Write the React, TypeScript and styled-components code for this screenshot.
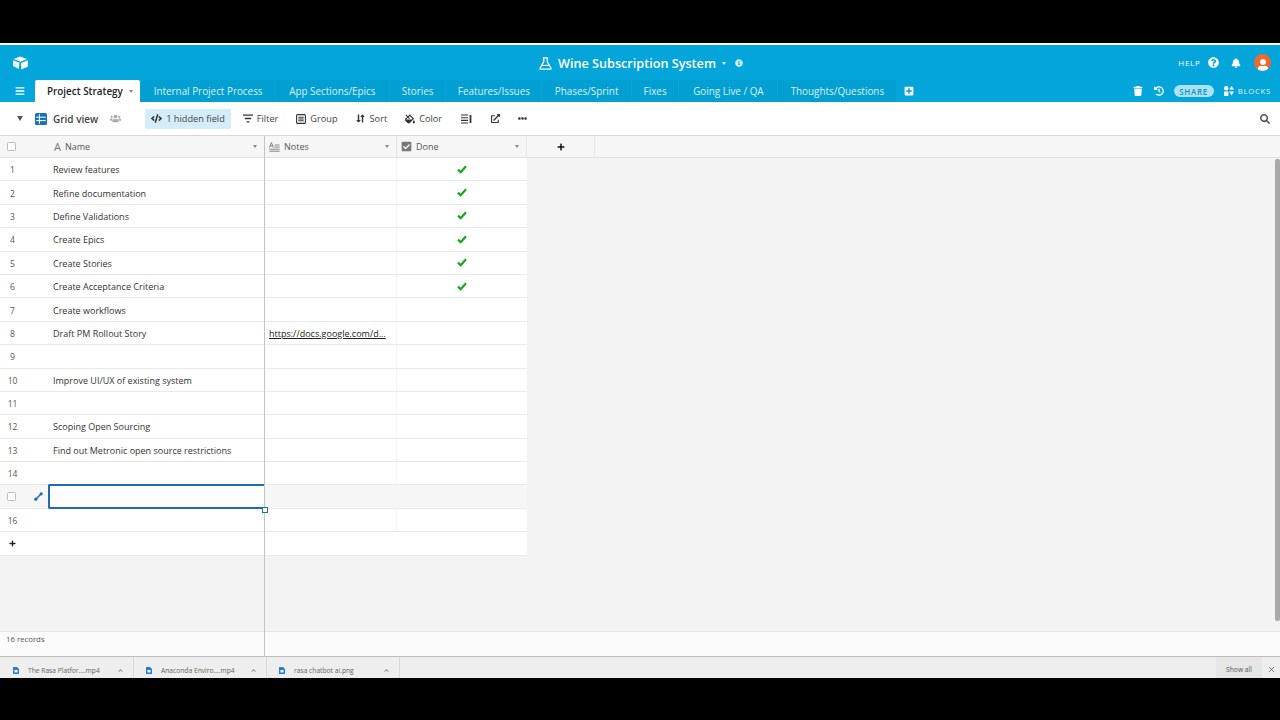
import React from "react";
import styled, { createGlobalStyle } from "styled-components";
import {
  FaBars,
  FaBell,
  FaCheckSquare,
  FaChevronUp,
  FaCode,
  FaEllipsisH,
  FaExternalLinkAlt,
  FaFillDrip,
  FaHistory,
  FaInfoCircle,
  FaLongArrowAltDown,
  FaLongArrowAltUp,
  FaPlus,
  FaPlusSquare,
  FaQuestionCircle,
  FaSearch,
  FaTrash,
  FaUser,
  FaUsers,
} from "react-icons/fa";
import { X } from "lucide-react";

const Global = createGlobalStyle`
  html, body { margin: 0; padding: 0; background: #000; overflow: hidden; }
  body { font-family: "Open Sans", "Noto Sans", sans-serif; color: #333; }
`;

const Screen = styled.div`
  width: 1280px;
  height: 720px;
  display: flex;
  flex-direction: column;
  background: #000;
  position: relative;
  overflow: hidden;
`;

const BlackBar = styled.div<{ h: number }>`
  height: ${({ h }) => h}px;
  flex: none;
  background: #000;
`;

const WhiteLine = styled.div`
  height: 2px;
  flex: none;
  background: #fff;
`;

const Header = styled.header`
  height: 57px;
  flex: none;
  background: #03a5da;
  color: #fff;
  display: flex;
  flex-direction: column;
  position: relative;
`;

const TopRow = styled.div`
  height: 35px;
  display: flex;
  align-items: center;
  justify-content: space-between;
  padding: 0 9px 0 12px;
`;

const Title = styled.div`
  display: flex;
  align-items: center;
  font-size: 12.65px;
  font-weight: 600;
  gap: 6px;
  position: absolute;
  left: 539px;
  top: 9px;
  height: 18px;
`;

const Caret = styled.span<{ dark?: boolean }>`
  display: inline-block;
  width: 0;
  height: 0;
  border-left: 2.5px solid transparent;
  border-right: 2.5px solid transparent;
  border-top: 3px solid ${({ dark }) => (dark ? "#888" : "rgba(255,255,255,.85)")};
`;

const ViewCaret = styled(Caret)`
  border-left-width: 3.5px;
  border-right-width: 3.5px;
  border-top-width: 5px;
  border-top-color: #555;
`;

const InfoWrap = styled.span`
  display: flex;
  margin-left: 3px;
  color: rgba(255, 255, 255, 0.8);
`;

const RightTools = styled.div`
  display: flex;
  align-items: center;
  gap: 7px;
`;

const HelpText = styled.span`
  font-size: 8px;
  letter-spacing: 0.7px;
  font-weight: 500;
`;

const BellWrap = styled.span`
  display: flex;
  margin-left: 5.5px;
`;

const Avatar = styled.div`
  width: 17px;
  height: 17px;
  border-radius: 50%;
  background: #ee6a2b;
  display: flex;
  align-items: flex-end;
  justify-content: center;
  overflow: hidden;
  margin-left: 6px;
`;

const TabRow = styled.div`
  height: 22px;
  display: flex;
  align-items: stretch;
  position: relative;
`;

const MenuBtn = styled.div`
  width: 35px;
  flex: none;
  display: flex;
  align-items: center;
  justify-content: center;
  padding-left: 4px;
  box-sizing: border-box;
`;

const ActiveTab = styled.div`
  display: flex;
  align-items: center;
  padding: 0 7px 0 12px;
  gap: 6.5px;
  font-size: 9.9px;
  font-weight: 600;
  color: #222;
  background: #fff;
  white-space: nowrap;
  border-radius: 2px 2px 0 0;
  margin-right: 1px;
`;

const Tab = styled.div<{ w: number }>`
  width: ${({ w }) => w}px;
  flex: none;
  display: flex;
  align-items: center;
  justify-content: center;
  box-sizing: border-box;
  font-size: 9.9px;
  white-space: nowrap;
  background: rgba(0, 0, 40, 0.035);
  border-right: 1px solid #03a5da;
  color: rgba(255, 255, 255, 0.86);
`;

const AddTab = styled.div`
  display: flex;
  align-items: center;
  margin-left: 7px;
`;

const BaseTools = styled.div`
  margin-left: auto;
  display: flex;
  align-items: center;
  gap: 11px;
  padding-right: 9px;
`;

const ShareBtn = styled.div`
  background: rgba(255, 255, 255, 0.68);
  color: #0b93c4;
  font-size: 8px;
  font-weight: 600;
  letter-spacing: 0.7px;
  height: 12px;
  width: 40px;
  margin-left: -1px;
  border-radius: 6px;
  display: flex;
  align-items: center;
  justify-content: center;
`;

const BlocksBtn = styled.div`
  display: flex;
  align-items: center;
  gap: 4px;
  font-size: 7.8px;
  letter-spacing: 0.7px;
  font-weight: 500;
  margin-left: -1px;
  color: rgba(255, 255, 255, 0.92);
`;

const Toolbar = styled.div`
  height: 33px;
  flex: none;
  background: #fff;
  display: flex;
  align-items: center;
  padding: 0 10px 0 17px;
  color: #444;
  font-size: 9.2px;
`;

const ViewName = styled.div`
  display: flex;
  align-items: center;
  gap: 6px;
  margin-left: 12px;
  font-weight: 600;
  font-size: 10px;
  color: #444;
`;

const UsersWrap = styled.span`
  display: flex;
  margin-left: 6px;
  color: #aaa;
`;

const ToolBtn = styled.div<{ active?: boolean; ml?: number }>`
  display: flex;
  align-items: center;
  gap: 4px;
  height: 20px;
  padding: 0 ${({ active }) => (active ? "6px" : "0")};
  margin-left: ${({ ml }) => ml ?? 18}px;
  border-radius: 2px;
  background: ${({ active }) => (active ? "#d3eefa" : "transparent")};
  font-weight: 500;
  white-space: nowrap;
  color: #444;

  svg {
    color: #333;
    flex: none;
  }
`;

const SortIcon = styled.span`
  display: flex;
  width: 11.5px;

  svg + svg {
    margin-left: -5px;
  }
`;

const Search = styled.div`
  margin-left: auto;
  display: flex;
  align-items: center;
  color: #555;
`;

const Grid = styled.main`
  flex: 1;
  min-height: 0;
  display: flex;
  background: #f3f3f3;
  position: relative;
  border-top: 1px solid #d9d9d9;
`;

const Pane = styled.section<{ frozen?: boolean }>`
  display: flex;
  flex-direction: column;
  position: relative;
  ${({ frozen }) => (frozen ? "width: 265px; flex: none; border-right: 1px solid #c4c4c4; box-sizing: border-box;" : "flex: 1;")}
`;

const HeaderRow = styled.div`
  height: 22px;
  flex: none;
  display: flex;
  background: #f6f6f6;
  border-bottom: 1px solid #e0e0e0;
  box-sizing: border-box;
  font-size: 9px;
  color: #555;
`;

const HeadCell = styled.div<{ w: number }>`
  width: ${({ w }) => w}px;
  flex: none;
  display: flex;
  align-items: center;
  gap: 4px;
  padding: 0 7px 0 4px;
  box-sizing: border-box;
  border-right: 1px solid #e6e6e6;
`;

const HeadSpacer = styled.span`
  flex: 1;
`;

const AddCol = styled(HeadCell)`
  justify-content: center;
  padding: 0;
  color: #111;
`;

const NumHead = styled.div`
  width: 48px;
  flex: none;
  padding-left: 7px;
  display: flex;
  align-items: center;
  box-sizing: border-box;
`;

const NameHead = styled.div`
  flex: 1;
  display: flex;
  align-items: center;
  gap: 4px;
  padding: 0 7px 0 6px;
`;

const GlyphA = styled.span`
  font-size: 11px;
  color: #777;
`;

const CheckBox = styled.span`
  width: 7px;
  height: 7px;
  border: 1px solid #bdbdbd;
  border-radius: 1.5px;
  background: #fff;
  display: block;
`;

const Row = styled.div<{ hot?: boolean }>`
  height: 23.4px;
  flex: none;
  display: flex;
  align-items: stretch;
  box-sizing: border-box;
  background: ${({ hot }) => (hot ? "#f6f6f6" : "#fff")};
  border-bottom: 1px solid #e9e9e9;
  font-size: 9px;
  color: #333;
`;

const NumCell = styled.div`
  width: 48px;
  flex: none;
  display: flex;
  align-items: center;
  justify-content: center;
  padding: 1px 23px 0 0;
  box-sizing: border-box;
  font-size: 8.5px;
  color: #555;
`;

const HotNum = styled(NumCell)`
  padding: 0 5px 0 7px;
  justify-content: space-between;
`;

const NameCell = styled.div`
  flex: 1;
  display: flex;
  align-items: center;
  padding: 1px 0 0 5px;
  white-space: nowrap;
`;

const ActiveCell = styled.div`
  flex: 1;
  border: 2px solid #1f6bb5;
  border-right: none;
  margin: -1px 0 -1px 0;
  background: #fff;
  border-radius: 2px 0 0 2px;
`;

const Handle = styled.span`
  position: absolute;
  left: 262px;
  top: 371px;
  width: 4px;
  height: 4px;
  background: #fff;
  border: 1px solid #1f6bb5;
  z-index: 2;
`;

const DataRow = styled.div<{ hot?: boolean }>`
  width: 262px;
  height: 23.4px;
  flex: none;
  display: flex;
  box-sizing: border-box;
  background: ${({ hot }) => (hot ? "#f6f6f6" : "#fff")};
  border-bottom: 1px solid #e9e9e9;
  font-size: 9px;
`;

const DataCell = styled.div<{ w: number; center?: boolean; line?: boolean }>`
  width: ${({ w }) => w}px;
  flex: none;
  display: flex;
  align-items: center;
  justify-content: ${({ center }) => (center ? "center" : "flex-start")};
  padding: ${({ center }) => (center ? "0" : "1px 0 0 4px")};
  box-sizing: border-box;
  border-right: ${({ line }) => (line ? "1px solid #f4f4f4" : "none")};
  overflow: hidden;
`;

const Link = styled.span`
  text-decoration: underline;
  color: #222;
  white-space: nowrap;
`;

const Spacer = styled.div`
  flex: 1;
`;

const PaneFooter = styled.div`
  height: 25px;
  flex: none;
  background: #fbfbfb;
  border-top: 1px solid #e6e6e6;
  font-size: 7.8px;
  color: #555;
  display: flex;
  align-items: center;
  padding: 0 0 10px 6px;
  box-sizing: border-box;
`;

const Scrollbar = styled.div`
  position: absolute;
  right: 0;
  top: 23px;
  width: 5px;
  height: 462px;
  background: #a9a9a9;
  border-radius: 2px;
`;

const Downloads = styled.footer`
  height: 22px;
  flex: none;
  background: #eeeeee;
  border-top: 1px solid #bdbdbd;
  box-sizing: border-box;
  display: flex;
  align-items: stretch;
  padding-left: 1px;
  font-size: 6.7px;
  color: #666;
`;

const DlItem = styled.div`
  width: 133px;
  flex: none;
  display: flex;
  align-items: center;
  padding: 5px 10px 0 12px;
  box-sizing: border-box;
  border-right: 1px solid #d8d8d8;
`;

const DlName = styled.span`
  margin-left: 9px;
  flex: 1;
  white-space: nowrap;
`;

const ShowAll = styled.div`
  margin-left: auto;
  width: 46px;
  padding-top: 4px;
  box-sizing: border-box;
  background: #e6e6e6;
  display: flex;
  align-items: center;
  justify-content: center;
  color: #555;
`;

const CloseBtn = styled.div`
  width: 18px;
  padding-top: 4px;
  box-sizing: border-box;
  display: flex;
  align-items: center;
  justify-content: center;
`;

const Logo = () => (
  <svg width="17" height="14" viewBox="0 0 17 14" fill="#fff" aria-hidden="true">
    <path d="M8 .6 1.6 3.1 8.4 5.7 15 3.1 Z" />
    <path d="M9.1 6.9V13.4L15.8 10.8V4.3Z" />
    <path d="M1 4.2V10L6.8 12.9 7.6 6.8Z" opacity=".9" />
  </svg>
);

const FlaskIcon = () => (
  <svg width="13" height="13" viewBox="0 0 13 13" fill="none" stroke="#fff" strokeWidth="1.2" aria-hidden="true">
    <path d="M3.8.8H9.2M4.8.8V4.6L1 11.2Q.7 12.2 1.7 12.2H11.3Q12.3 12.2 12 11.2L8.2 4.6V.8" />
    <path d="M3 8.4H10" />
  </svg>
);

const BlocksIcon = () => (
  <svg width="10" height="10" viewBox="0 0 10 10" fill="#fff" aria-hidden="true">
    <circle cx="2.2" cy="2.3" r="2.2" />
    <rect x="0" y="5.6" width="4.4" height="4.4" rx=".6" />
    <path d="M7.6 0 10 3.6H5.2Z" />
    <path d="M5.2 5.6H10L7.6 9.6Z" />
  </svg>
);

const FilterIcon = () => (
  <svg width="10" height="9" viewBox="0 0 10 9" fill="none" stroke="#333" strokeWidth="1.3" aria-hidden="true">
    <path d="M0 1.2H10M1.8 4.5H8.2M3.6 7.8H6.4" />
  </svg>
);

const GroupIcon = () => (
  <svg width="10" height="10" viewBox="0 0 10 10" fill="none" stroke="#333" strokeWidth="1.1" aria-hidden="true">
    <rect x=".6" y=".6" width="8.8" height="8.8" rx="1" />
    <path d="M2.3 3.3H7.7M2.3 5H7.7M2.3 6.8H7.7" />
  </svg>
);

const RowHeightIcon = () => (
  <svg width="11" height="10" viewBox="0 0 11 10" fill="none" stroke="#333" strokeWidth="1.1" aria-hidden="true">
    <path d="M0 1H7M0 3.7H7M0 6.4H7M0 9H7" />
    <path d="M9.5 1V9" strokeWidth="1.8" />
  </svg>
);

const GridIcon = () => (
  <svg width="12" height="12" viewBox="0 0 12 12" aria-hidden="true">
    <rect width="12" height="12" rx="1.5" fill="#1773b8" />
    <path d="M1.2 4.2H10.8M1.2 7.6H10.8M4.4 1.2V10.8" stroke="#fff" strokeWidth="1" />
  </svg>
);

const NotesIcon = () => (
  <svg width="11" height="10" viewBox="0 0 11 10" fill="none" stroke="#777" strokeWidth=".9" aria-hidden="true">
    <path d="M.4 5.6 2.4.6 4.4 5.6M1.1 4H3.7M5.5 3H10.6M5.5 5H10.6M.4 7.2H10.6M.4 9.2H10.6" />
  </svg>
);

const ExpandIcon = () => (
  <svg width="9" height="9" viewBox="0 0 9 9" fill="#1f6bb5" aria-hidden="true">
    <path d="M1.8 7.2 7.2 1.8" stroke="#1f6bb5" strokeWidth="1.5" />
    <circle cx="1.8" cy="7.2" r="1.6" />
    <circle cx="7.2" cy="1.8" r="1.6" />
  </svg>
);

const DoneCheck = () => (
  <svg width="10" height="9" viewBox="0 0 10 9" fill="none" stroke="#12a81f" strokeWidth="2.2" aria-hidden="true">
    <path d="M1 4.6 3.7 7.2 9 1.2" />
  </svg>
);

const FileIcon = () => (
  <svg width="6" height="7" viewBox="0 0 6 7" aria-hidden="true">
    <path d="M0 0H4L6 2V7H0Z" fill="#2a7fd0" />
    <rect x="1.5" y="3" width="3" height="2.4" fill="#fff" />
  </svg>
);

const tabs = [
  { label: "Internal Project Process", w: 134.5 },
  { label: "App Sections/Epics", w: 114 },
  { label: "Stories", w: 56.5 },
  { label: "Features/Issues", w: 96 },
  { label: "Phases/Sprint", w: 89.5 },
  { label: "Fixes", w: 47.5 },
  { label: "Going Live / QA", w: 99 },
  { label: "Thoughts/Questions", w: 119 },
];

const rows: { name?: string; done?: boolean; note?: string }[] = [
  { name: "Review features", done: true },
  { name: "Refine documentation", done: true },
  { name: "Define Validations", done: true },
  { name: "Create Epics", done: true },
  { name: "Create Stories", done: true },
  { name: "Create Acceptance Criteria", done: true },
  { name: "Create workflows" },
  { name: "Draft PM Rollout Story", note: "https://docs.google.com/d..." },
  {},
  { name: "Improve UI/UX of existing system" },
  {},
  { name: "Scoping Open Sourcing" },
  { name: "Find out Metronic open source restrictions" },
  {},
  {},
  {},
];

const downloads = ["The Rasa Platfor....mp4", "Anaconda Enviro....mp4", "rasa chatbot ai.png"];

const App: React.FC = () => (
  <Screen>
    <Global />
    <BlackBar h={43} />
    <WhiteLine />
    <Header>
      <TopRow>
        <Logo />
        <Title>
          <FlaskIcon />
          <span>Wine Subscription System</span>
          <Caret />
          <InfoWrap>
            <FaInfoCircle size={8} />
          </InfoWrap>
        </Title>
        <RightTools>
          <HelpText>HELP</HelpText>
          <FaQuestionCircle size={11} />
          <BellWrap>
            <FaBell size={10} />
          </BellWrap>
          <Avatar>
            <FaUser size={12} color="#fff" />
          </Avatar>
        </RightTools>
      </TopRow>
      <TabRow>
        <MenuBtn>
          <FaBars size={10} />
        </MenuBtn>
        <ActiveTab>
          <span>Project Strategy</span>
          <Caret dark />
        </ActiveTab>
        {tabs.map((t) => (
          <Tab key={t.label} w={t.w}>
            {t.label}
          </Tab>
        ))}
        <AddTab>
          <FaPlusSquare size={10} />
        </AddTab>
        <BaseTools>
          <FaTrash size={10} />
          <FaHistory size={10} />
          <ShareBtn>SHARE</ShareBtn>
          <BlocksBtn>
            <BlocksIcon />
            BLOCKS
          </BlocksBtn>
        </BaseTools>
      </TabRow>
    </Header>
    <Toolbar>
      <ViewCaret dark />
      <ViewName>
        <GridIcon />
        <span>Grid view</span>
        <UsersWrap>
          <FaUsers size={11} />
        </UsersWrap>
      </ViewName>
      <ToolBtn active ml={24}>
        <FaCode size={11} />
        1 hidden field
      </ToolBtn>
      <ToolBtn ml={12}>
        <FilterIcon />
        Filter
      </ToolBtn>
      <ToolBtn>
        <GroupIcon />
        Group
      </ToolBtn>
      <ToolBtn ml={16.5}>
        <SortIcon>
          <FaLongArrowAltDown size={9} />
          <FaLongArrowAltUp size={9} />
        </SortIcon>
        Sort
      </ToolBtn>
      <ToolBtn>
        <FaFillDrip size={10} />
        Color
      </ToolBtn>
      <ToolBtn ml={19}>
        <RowHeightIcon />
      </ToolBtn>
      <ToolBtn ml={19}>
        <FaExternalLinkAlt size={9} />
      </ToolBtn>
      <ToolBtn>
        <FaEllipsisH size={9} />
      </ToolBtn>
      <Search>
        <FaSearch size={10} />
      </Search>
    </Toolbar>
    <Grid>
      <Pane frozen>
        <HeaderRow>
          <NumHead>
            <CheckBox />
          </NumHead>
          <NameHead>
            <GlyphA>A</GlyphA>
            <span>Name</span>
            <HeadSpacer />
            <Caret dark />
          </NameHead>
        </HeaderRow>
        {rows.map((r, i) =>
          i === 14 ? (
            <Row key={i} hot>
              <HotNum>
                <CheckBox />
                <ExpandIcon />
              </HotNum>
              <ActiveCell />
            </Row>
          ) : (
            <Row key={i}>
              <NumCell>{i + 1}</NumCell>
              <NameCell>{r.name}</NameCell>
            </Row>
          )
        )}
        <Row>
          <NumCell>
            <FaPlus size={7} color="#222" />
          </NumCell>
        </Row>
        <Handle />
        <Spacer />
        <PaneFooter>16 records</PaneFooter>
      </Pane>
      <Pane>
        <HeaderRow>
          <HeadCell w={132}>
            <NotesIcon />
            <span>Notes</span>
            <HeadSpacer />
            <Caret dark />
          </HeadCell>
          <HeadCell w={130}>
            <FaCheckSquare size={11} color="#777" />
            <span>Done</span>
            <HeadSpacer />
            <Caret dark />
          </HeadCell>
          <AddCol w={68}>
            <FaPlus size={8} />
          </AddCol>
        </HeaderRow>
        {rows.map((r, i) => (
          <DataRow key={i} hot={i === 14}>
            <DataCell w={132} line>
              {r.note && <Link>{r.note}</Link>}
            </DataCell>
            <DataCell w={130} center>
              {r.done && <DoneCheck />}
            </DataCell>
          </DataRow>
        ))}
        <DataRow />
        <Spacer />
        <PaneFooter />
      </Pane>
      <Scrollbar />
    </Grid>
    <Downloads>
      {downloads.map((d) => (
        <DlItem key={d}>
          <FileIcon />
          <DlName>{d}</DlName>
          <FaChevronUp size={5} color="#777" />
        </DlItem>
      ))}
      <ShowAll>Show all</ShowAll>
      <CloseBtn>
        <X size={9} color="#555" />
      </CloseBtn>
    </Downloads>
    <BlackBar h={42} />
  </Screen>
);

export default App;
